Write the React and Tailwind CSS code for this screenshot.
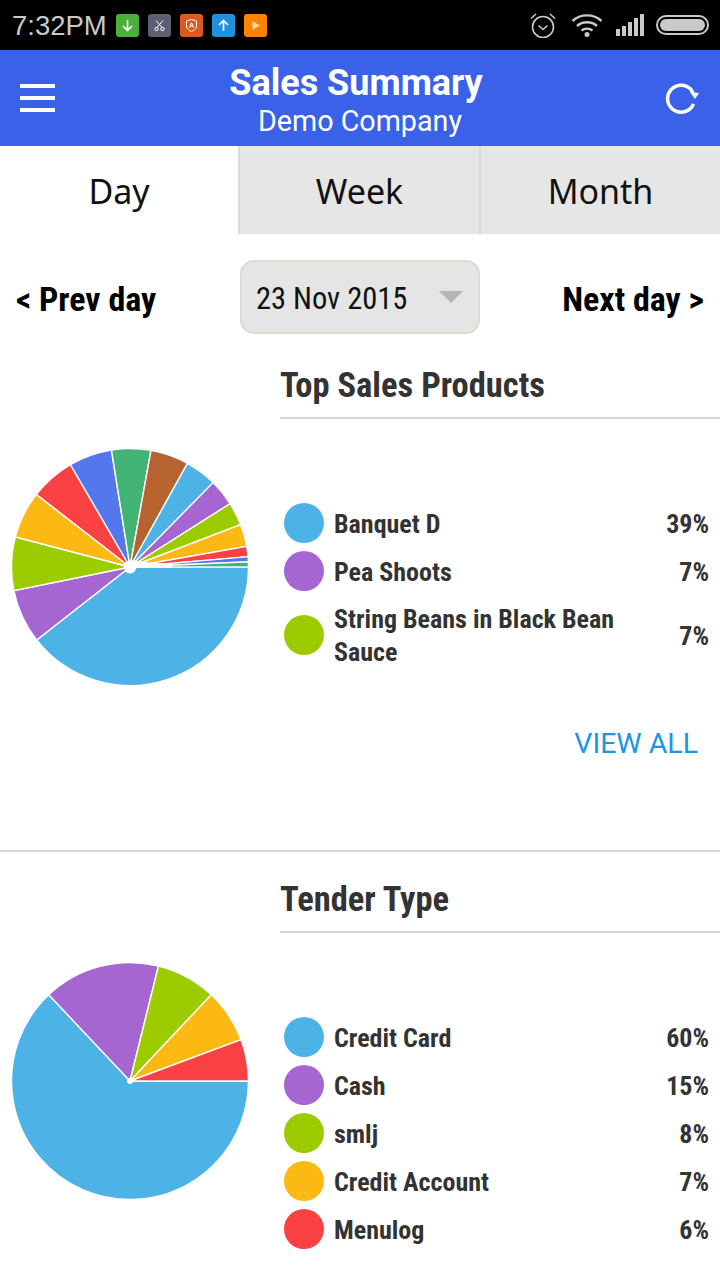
import React from 'react';

const BLUE = '#4db3e6';
const PURPLE = '#a666d1';
const LIME = '#9ccc00';
const AMBER = '#fdb913';
const RED = '#f94144';
const ROYAL = '#5577ee';
const GREEN = '#41b374';
const BROWN = '#b7632f';

const productSlices = [
  [0, 142, BLUE],
  [142, 168.5, PURPLE],
  [168.5, 194.7, LIME],
  [194.7, 217.8, AMBER],
  [217.8, 239.8, RED],
  [239.8, 261, ROYAL],
  [261, 280.2, GREEN],
  [280.2, 299, BROWN],
  [299, 314.6, BLUE],
  [314.6, 327.7, PURPLE],
  [327.7, 339, LIME],
  [339, 350, AMBER],
  [350, 355, RED],
  [355, 357.5, ROYAL],
  [357.5, 360, GREEN],
];

const tenderSlices = [
  [0, 226.7, BLUE],
  [226.7, 283.9, PURPLE],
  [283.9, 313.3, LIME],
  [313.3, 339.6, AMBER],
  [339.6, 360, RED],
];

const products = [
  { color: BLUE, name: 'Banquet D', pct: '39%' },
  { color: PURPLE, name: 'Pea Shoots', pct: '7%' },
  { color: LIME, name: 'String Beans in Black Bean Sauce', pct: '7%' },
];

const tenders = [
  { color: BLUE, name: 'Credit Card', pct: '60%' },
  { color: PURPLE, name: 'Cash', pct: '15%' },
  { color: LIME, name: 'smlj', pct: '8%' },
  { color: AMBER, name: 'Credit Account', pct: '7%' },
  { color: RED, name: 'Menulog', pct: '6%' },
];

const point = (deg, r) => {
  const a = (deg * Math.PI) / 180;
  return `${(120 + r * Math.cos(a)).toFixed(2)} ${(120 + r * Math.sin(a)).toFixed(2)}`;
};

const Pie = ({ slices, hub, thin }) => (
  <svg width="240" height="240" viewBox="0 0 240 240" className="block">
    {slices.map(([from, to, color]) => (
      <path
        key={from}
        d={`M120 120 L${point(from, 118.5)} A118.5 118.5 0 ${to - from > 180 ? 1 : 0} 1 ${point(to, 118.5)} Z`}
        fill={color}
        stroke="#fff"
        strokeWidth="1.4"
      />
    ))}
    <circle cx="120" cy="120" r={hub} fill="#fff" />
    {thin && <path d="M120 113L143 116L163 116.500L163 120L120 120Z" fill="#fff" />}
    {thin && <path d="M163 116.500V120H238" fill="none" stroke="#c8d4dc" strokeWidth="0.8" />}
  </svg>
);

const Legend = ({ rows }) => (
  <div className="flex flex-col">
    {rows.map((row) => (
      <div key={row.name} className="flex items-center min-h-[48px]">
        <div className="w-10 h-10 rounded-full shrink-0" style={{ backgroundColor: row.color }} />
        <div className="ml-[10px] flex-1 pt-2 pb-[6px] text-[26px] leading-[33px] font-bold text-[#333] [font-stretch:75%]">{row.name}</div>
        <div className="w-[60px] pt-[2px] text-right text-[26px] leading-[33px] font-bold text-[#333] [font-stretch:75%]">{row.pct}</div>
      </div>
    ))}
  </div>
);

const StatusBadge = ({ className, children }) => (
  <div className={`w-[23px] h-[23px] rounded-[3px] flex items-center justify-center ${className}`}>
    <svg width="15" height="15" viewBox="0 0 15 15" fill="none" stroke="#fff" strokeWidth="1.6">
      {children}
    </svg>
  </div>
);

const StatusBar = () => (
  <div className="h-[50px] bg-black flex items-center pl-3 pr-[11px] font-['Liberation_Sans',sans-serif]">
    <span className="w-[104px] pt-[2px] text-[27.500px] text-[#c9c9c9]">7:32PM</span>
    <div className="flex gap-[9px]">
      <StatusBadge className="bg-[#4caf3c]"><path d="M7.500 2v10.500M3 8l4.500 4.500L12 8" /></StatusBadge>
      <StatusBadge className="bg-[#5a6072]">
        <path d="M4 2.500l6 7M11 2.500l-6 7" strokeWidth="1" />
        <circle cx="4.500" cy="11" r="1.700" strokeWidth="1" />
        <circle cx="10.500" cy="11" r="1.700" strokeWidth="1" />
      </StatusBadge>
      <StatusBadge className="bg-[#dc5a20]">
        <path d="M2.500 3l5-1.500 5 1.500v5c0 3-3 4.500-5 5.500-2-1-5-2.500-5-5.500z" strokeWidth="1" />
        <path d="M5.500 9.500l2-5 2 5M6 8h3" strokeWidth="1" />
      </StatusBadge>
      <StatusBadge className="bg-[#2090dc]"><path d="M7.500 13V2.500M3 7l4.500-4.500L12 7" /></StatusBadge>
      <StatusBadge className="bg-[#ff8200]"><path d="M4.500 3l7.500 4.500L4.500 12z" fill="#ffd9a0" stroke="none" /></StatusBadge>
    </div>
    <div className="ml-auto flex items-center">
      <svg width="26" height="26" viewBox="0 0 26 26" fill="none" stroke="#c9c9c9" strokeWidth="1.600">
        <circle cx="13" cy="15" r="10.500" />
        <path d="M8.500 13.500l4.500 4 4.500-4" />
        <path d="M1 6.500l5-4.500M25 6.500l-5-4.500" />
      </svg>
      <svg className="ml-[15px]" width="32" height="24" viewBox="0 0 32 24" fill="none" stroke="#c9c9c9" strokeWidth="2.400">
        <path d="M1.500 8c8-7.500 21-7.500 29 0" />
        <path d="M6 13c5.500-5 14.500-5 20 0" />
        <path d="M10.500 17.500c3-2.500 8-2.500 11 0" />
        <circle cx="16" cy="21.500" r="2.500" fill="#c9c9c9" stroke="none" />
      </svg>
      <div className="ml-[13px] flex items-end gap-[2px] h-[22px]">
        <div className="w-1 h-[7px] bg-[#c9c9c9]" />
        <div className="w-1 h-[10px] bg-[#c9c9c9]" />
        <div className="w-1 h-[14px] bg-[#c9c9c9]" />
        <div className="w-1 h-[18px] bg-[#c9c9c9]" />
        <div className="w-1 h-[22px] bg-[#c9c9c9]" />
      </div>
      <div className="ml-3 w-[53px] h-[20px] rounded-full border-2 border-[#c9c9c9] p-[2px]">
        <div className="w-full h-full rounded-full bg-[#c9c9c9]" />
      </div>
    </div>
  </div>
);

const Header = () => (
  <div className="h-[96px] bg-[#3a62e8] flex items-center pl-5 pr-[21px] text-white">
    <div className="w-[35px] flex flex-col gap-2 shrink-0">
      <div className="h-1 bg-white" />
      <div className="h-1 bg-white" />
      <div className="h-1 bg-white" />
    </div>
    <div className="flex-1 flex flex-col items-center pt-[5px]">
      <div className="text-[36px] leading-[40px] font-bold mr-[8px]">Sales Summary</div>
      <div className="text-[28.700px] leading-[36px]">Demo Company</div>
    </div>
    <svg width="34" height="34" viewBox="0 0 34 34" fill="none" stroke="#fff" strokeWidth="3.500">
      <path d="M28.500 23A13.500 13.500 0 1 1 26 8.500L28 12" />
      <path d="M25 11l9 1-4 6z" fill="#fff" stroke="none" />
    </svg>
  </div>
);

const Tabs = () => (
  <div className="h-[88px] flex text-[34px] text-[#111] font-['Noto_Sans',sans-serif]">
    <div className="w-[238px] bg-white flex items-center justify-center pt-[2px]">Day</div>
    <div className="w-[243px] bg-[#e6e6e6] flex items-center justify-center pt-[2px] border-l-2 border-r-2 border-l-[#dcdcd2] border-r-[#dadada]">Week</div>
    <div className="flex-1 bg-[#e6e6e6] flex items-center justify-center pt-[2px]">Month</div>
  </div>
);

const DateNav = () => (
  <div className="h-[74px] mt-[26px] flex items-center">
    <div className="w-[240px] pl-4 pt-[5px] text-[34px] font-bold text-black [font-stretch:75%]">&lt; Prev day</div>
    <div className="w-[240px] h-[74px] bg-[#e5e5e5] border-2 border-[#dedccf] rounded-[14px] flex items-center pl-[14px] text-[30.500px] text-[#111] [font-stretch:75%]">
      <span className="pt-[4px]">23 Nov 2015</span>
      <div className="ml-auto mr-[15px] w-0 h-0 border-x-[12px] border-x-transparent border-t-[12px] border-t-[#b5b5b5]" />
    </div>
    <div className="flex-1 pr-4 pt-[5px] text-right text-[34px] font-bold text-black [font-stretch:75%]">Next day &gt;</div>
  </div>
);

const Section = ({ title, slices, rows, hub, thin, className }) => (
  <div className={className}>
    <div className="ml-[280px] h-[68px] border-b-2 border-[#d6d6d6] flex items-center">
      <h2 className="pt-[4px] text-[34.500px] font-bold text-[#333] [font-stretch:75%]">{title}</h2>
    </div>
    <div className="flex mt-[28px]">
      <div className="w-[284px] pl-[10px] shrink-0"><Pie slices={slices} hub={hub} thin={thin} /></div>
      <div className="flex-1 pr-[11px] pt-[52px]"><Legend rows={rows} /></div>
    </div>
  </div>
);

export default function App() {
  return (
    <div className="w-[720px] h-[1280px] bg-white overflow-hidden font-['Roboto',sans-serif]">
      <StatusBar />
      <Header />
      <Tabs />
      <DateNav />
      <Section title="Top Sales Products" slices={productSlices} rows={products} hub={6.5} thin className="mt-[17px]" />
      <div className="h-[163px] flex items-start justify-end pr-[22px] pt-[36px]">
        <span className="text-[28.500px] text-[#1a96e6]">VIEW ALL</span>
      </div>
      <Section title="Tender Type" slices={tenderSlices} rows={tenders} hub={3} className="pt-[13px] border-t-2 border-[#d6d6d6]" />
    </div>
  );
}
